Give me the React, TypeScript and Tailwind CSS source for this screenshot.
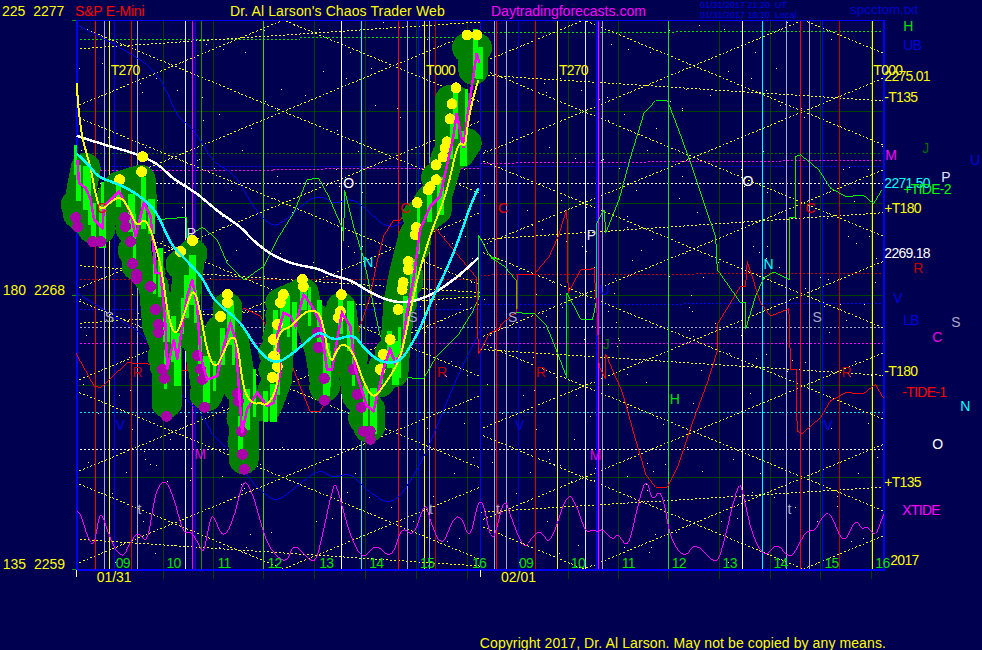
const at = (ox: number, oy: number, s: string) =>
  s
    .trim()
    .split(/\s+/)
    .map((p) => {
      const [x, y] = p.split(",").map(Number);
      return `${(ox + x / 3).toFixed(1)},${(oy + y / 3).toFixed(1)}`;
    })
    .join(" ");

// crop origins the curve points were read from
const z1 = (s: string) => at(0, 0, s);
const z2 = (s: string) => at(491, 0, s);
const z3 = (s: string) => at(0, 325, s);
const z4 = (s: string) => at(491, 325, s);
const z5 = (s: string) => at(60, 140, s);
const z6 = (s: string) => at(270, 20, s);

// rounds a point list off through the segment midpoints
function smooth(pts: string) {
  const p = pts.split(" ").map((q) => q.split(",").map(Number));
  let d = `M${p[0][0]} ${p[0][1]}`;
  for (let i = 1; i < p.length - 1; i++) {
    const mx = (p[i][0] + p[i + 1][0]) / 2;
    const my = (p[i][1] + p[i + 1][1]) / 2;
    d += `Q${p[i][0]} ${p[i][1]} ${mx} ${my}`;
  }
  const last = p[p.length - 1];
  return d + `L${last[0]} ${last[1]}`;
}

const darkGrid = [162, 213, 263, 314, 365, 416, 467, 518, 568, 618, 668, 719, 770, 821, 872];
const gridY = [111, 203, 295, 386, 478];

const verticals: [number, string][] = [
  [94, "#ff0000"], [103, "#a8a8c8"], [108, "#ffff00"], [113, "#0000e0"], [130, "#d80000"],
  [136, "#a8a8c8"], [184, "#e8e8ff"], [191, "#ff00ff"], [194, "#0000ff"], [200, "#00a000"],
  [263, "#20e020"], [341, "#ffffff"], [361, "#00ffff"], [398, "#ff0000"], [407, "#a8a8c8"],
  [418, "#0000ff"], [424, "#ffff00"], [429, "#a8a8c8"], [435, "#c00000"], [480, "#0000ff"],
  [494, "#a8a8c8"], [496, "#ff0000"], [506, "#a8a8c8"], [518, "#0000c0"], [535, "#e00000"],
  [557, "#ffff00"], [585, "#e8e8ff"], [596, "#0000ff"], [597, "#0000ff"], [598, "#ff00ff"],
  [602, "#a8a8c8"], [668, "#20e020"], [742, "#ffffff"], [762, "#00ffff"], [787, "#a8a8c8"],
  [801, "#ff0000"], [810, "#a8a8c8"], [823, "#0000ff"], [840, "#c00000"], [873, "#ffff00"],
];

const dotted: [number, number, number, number, string][] = [
  [75, 39, 300, 39, "#00e000"], [300, 37, 480, 37, "#00e000"], [480, 32, 885, 31, "#00e000"],
  [75, 153, 885, 153, "#007000"],
  [75, 170, 273, 170, "#ff00ff"], [273, 169, 480, 168, "#ff00ff"], [480, 163, 885, 160, "#ff00ff"],
  [75, 166, 885, 166, "#0000ff"],
  [75, 183, 885, 183, "#ffffff"],
  [75, 279, 480, 279, "#c00000"], [480, 275, 885, 273, "#c00000"],
  [75, 310, 480, 310, "#0000ff"], [480, 305, 885, 303, "#0000ff"],
  [75, 328, 885, 328, "#a8a8c8"],
  [75, 344, 885, 344, "#ff00ff"],
  [75, 413, 885, 413, "#00e8e8"],
  [75, 450, 885, 450, "#ffffff"],
];

const flatLines: [number, number, number, number][] = [
  [75, 49, 480, 22], [75, 266, 480, 293], [75, 324, 480, 297], [75, 540, 480, 567],
  [480, 75, 885, 101], [480, 240, 885, 213], [480, 350, 885, 376], [480, 513, 885, 488],
];

const curves: { pts: string; color: string; round?: boolean }[] = [
  {
    color: "#0000f0",
    round: true,
    pts: z1("228,75 300,110 370,150 430,185 470,225 490,255 510,300 530,350 570,380 600,420 640,490 700,520 740,590 780,650 820,682 850,665 880,640 930,595 970,590 1000,615 1050,595 1090,620 1150,680 1200,680 1240,620"),
  },
  {
    color: "#0000f0",
    round: true,
    pts: z1("228,880 300,925 380,975") + " " + z3("440,40 540,215 600,260 640,340 690,378 750,470 800,515 830,532 880,495 940,445 970,440 1000,462 1050,445 1090,490 1150,535 1190,528 1240,460 1290,360 1360,180 1440,20"),
  },
  {
    color: "#00f000",
    pts: z1("470,660 530,655 558,655 558,715 605,682 650,720 680,790 730,842 790,800 830,720 880,640 920,540 955,535 985,590 1028,690 1030,725 1033,570 1060,680 1090,775") + " " + z6("300,810 330,950 380,1030 410,1075 460,1078 500,1010 560,950 610,870 625,840 625,645 660,710 690,720") + " " + z2("0,775 40,800 78,845 78,940 130,942 165,975 190,1035 228,1135 228,880 270,960 305,960 318,900 318,670 340,630 345,700 385,600 420,470 460,340 495,302 530,302 560,380 600,490 650,640 675,710 680,810 750,910 765,910 765,990 795,890 820,835 850,817 897,840 897,655 915,655 915,470 930,465 985,510 1020,565 1065,590 1120,587 1150,612 1175,570"),
  },
  {
    color: "#ff0000",
    pts: z5("45,640 100,740 120,745 200,670 280,675 380,695 385,635 425,665 500,570 550,505 600,530 650,610") + " " + z6("0,930 50,1000 85,1090 120,1178 150,1175 200,1080 225,985 225,1130 270,920 300,830 320,730 340,650 370,602 390,602 410,570 470,570 500,630 550,690 620,775 625,1005 660,940 690,925") + " " + z2("30,975 78,935 80,825 130,825 175,770 200,715 228,630 232,880 270,810 310,808 320,965") + " " + z4("325,125 345,165 345,90 395,205 430,330 465,450 495,490 530,490 560,430 600,310 650,175 680,80") + " " + z2("680,975 750,860 765,860 770,785 810,910 840,950 895,928 897,975") + " " + z4("900,135 917,135 920,320 935,328 990,280 1020,230 1065,205 1120,208 1155,180 1180,222"),
  },
  {
    color: "#ff00ff",
    round: true,
    pts: z3("228,560 240,565 260,640 280,670 295,575 305,572 320,620 345,680 370,700 385,660 415,620 440,665 465,495 495,465 520,520 550,635 570,618 600,670 610,690 630,580 640,575 670,650 705,570 730,455 760,515 795,650 830,700 860,715 880,658 910,690 945,722 965,640 1000,478 1010,485 1050,640 1090,710 1125,655 1175,710 1205,600 1240,645 1275,527 1290,590 1325,675 1360,580 1385,577 1410,655 1440,497 1470,630") + " " + z4("0,630 10,645 40,515 60,580 100,680 125,635 150,617 178,668 230,497 260,550 285,630 305,615 320,625 335,612 365,650 380,625 410,675 430,595 465,450 485,535 505,497 520,530 540,650 585,705 612,652 670,718 690,700 745,460 760,520 785,635 825,705 858,652 900,710 930,650 950,618 975,622 995,575 1020,562 1060,668 1095,580 1115,618 1130,605 1155,640 1180,570"),
  },
];

const blobs = [
  z5("75,85 55,190 60,230 110,270 120,220 175,140 240,120 245,200 225,310 230,360 280,440 290,560 320,640 320,790"),
  z5("385,380 370,500 395,590"),
  z5("430,700 440,770 470,700 490,600 520,600 550,780 550,960"),
  z5("600,800 620,800 650,720 660,560"),
  z6("30,850 100,820 110,870 150,1000 165,1100"),
  z6("215,880 230,1000 250,1050 260,1130 300,1170 295,1225"),
  z6("370,1060 385,850 400,770 430,650 460,600 500,570 500,530 540,400 540,240"),
  z6("590,370 570,400"),
  z6("610,100 610,150"),
];

const magentaMain =
  z5("50,60 55,130 75,145 90,180 100,240 125,265 130,200 175,155 210,220 225,290 250,190 270,230 285,400 300,400 315,560 320,690 340,600 350,660 370,530 380,470 395,420 410,500 420,650 440,720 470,710 490,620 510,550 525,600 545,880 560,810 590,760 620,800 640,790 660,700") +
  " " +
  z6("20,950 40,880 60,890 75,920 100,825 125,860 150,910 170,1050 185,1050 215,880 240,920 255,1050 290,1160 310,1175 340,1050 360,990 375,1030 395,1000 410,880 430,780 450,630 480,560 510,530 550,350 560,280 580,385 595,270 620,100 628,130");

const yellowMain =
  z1("228,248 232,320") +
  " " +
  z5("65,0 90,80 105,170 122,215 150,185 180,170 205,205 230,265 255,230 290,330 310,430 320,520 345,600 375,510 400,440 420,520 440,640 465,690 490,640 510,590 530,600 550,760 580,795 600,790 620,800 650,750 660,640") +
  " " +
  z6("10,1000 30,930 60,925 100,880 130,870 155,890 180,1040 200,990 220,970 250,1000 280,1090 310,1140 340,1100 380,1040 400,980 440,780 470,680 490,620 530,520 565,360 585,385 592,320 605,250 625,180");

const cyanMain =
  z1("228,462 260,490 290,530 330,545 380,565 430,598 470,640 500,710 520,745 570,795 610,840 640,905 720,965") +
  " " +
  z3("760,60 800,105 830,115 860,100 910,60 945,28 965,25 1000,48 1040,35 1065,35 1090,70 1140,115 1200,115 1240,50 1265,0") +
  " " +
  z1("1300,890 1340,810 1380,710 1410,620 1435,565");

const whiteMain = z1("228,408 280,425 340,443 400,460 470,490 520,540 590,580 650,635 720,680 760,725 820,770 890,797 950,805 1000,830 1050,840 1110,880 1170,905 1220,910 1290,890 1370,835 1435,775");

const yellowDots = [
  [142, 157], [141, 172], [119, 180], [180, 252], [192, 241], [227, 295], [227, 303], [220, 317],
  [302, 280], [303, 287], [283, 295], [280, 303], [277, 325], [273, 340], [273, 357], [277, 367],
  [272, 378], [341, 295], [340, 312], [338, 318], [390, 340], [383, 355], [380, 370], [403, 283],
  [402, 290], [398, 310], [408, 262], [408, 270], [417, 203], [416, 228], [415, 235], [430, 187],
  [428, 190], [436, 180], [436, 165], [443, 157], [445, 148], [447, 142], [450, 119], [452, 104],
  [456, 88], [467, 35], [477, 35],
];

const purpleDots = [
  [75, 218], [77, 227], [92, 242], [100, 242], [124, 218], [125, 227], [130, 242], [132, 264],
  [136, 275], [136, 279], [150, 287], [155, 310], [158, 325], [158, 333], [162, 370], [164, 379],
  [166, 417], [197, 356], [200, 370], [202, 380], [204, 408], [237, 394], [238, 402], [241, 432],
  [242, 455], [244, 470], [317, 333], [318, 348], [324, 379], [324, 401], [353, 370], [357, 395],
  [361, 408], [363, 432], [370, 432], [370, 440],
];

const labels: [number, number, string, string][] = [
  [110, 75, "T270", "#ffff00"], [426, 75, "T000", "#ffff00"], [559, 75, "T270", "#ffff00"], [874, 75, "T000", "#ffff00"],
  [885, 81, "2275.01", "#ffff00"], [885, 102, "-T135", "#ffff00"], [886, 160, "M", "#ff00ff"],
  [885, 188, "2271.50", "#00ffff"], [904, 194, "+TIDE-2", "#00ff00"], [942, 182, "P", "#e0e0ff"],
  [885, 213, "+T180", "#ffff00"], [885, 258, "2269.18", "#ffffff"], [914, 273, "R", "#c00000"],
  [894, 303, "V", "#0000e0"], [904, 326, "LB", "#0000e0"], [952, 328, "S", "#a8a8c8"],
  [933, 343, "C", "#e000e0"], [885, 377, "-T180", "#ffff00"], [903, 398, "-TIDE-1", "#ff0000"],
  [961, 412, "N", "#00ffff"], [933, 450, "O", "#ffffff"], [885, 488, "+T135", "#ffff00"],
  [903, 516, "XTIDE", "#ff00ff"], [891, 566, "2017", "#ffff00"], [904, 31, "H", "#00e000"],
  [904, 50, "UB", "#0000e0"], [923, 153, "J", "#007000"], [971, 165, "U", "#0000e0"],
  [343, 188, "O", "#ffffff"], [363, 267, "N", "#00ffff"], [400, 213, "C", "#e00000"], [96, 213, "C", "#e00000"],
  [186, 238, "P", "#e0e0ff"], [104, 323, "S", "#a8a8c8"], [408, 323, "S", "#a8a8c8"], [132, 378, "R", "#c00000"],
  [437, 378, "R", "#c00000"], [115, 431, "V", "#0000e0"], [137, 515, "t", "#a8a8c8"], [429, 515, "t", "#a8a8c8"],
  [194, 460, "M", "#e000e0"], [498, 213, "C", "#e00000"], [587, 240, "P", "#e0e0ff"], [600, 295, "U", "#0000e0"],
  [508, 323, "S", "#a8a8c8"], [813, 323, "S", "#a8a8c8"], [743, 186, "O", "#ffffff"], [764, 269, "N", "#00ffff"],
  [806, 213, "C", "#e00000"], [536, 378, "R", "#c00000"], [842, 378, "R", "#c00000"], [603, 350, "J", "#007000"],
  [515, 431, "V", "#0000e0"], [824, 431, "V", "#0000e0"], [590, 461, "M", "#e000e0"], [670, 405, "H", "#00e000"],
  [496, 515, "t", "#a8a8c8"], [788, 515, "t", "#a8a8c8"],
  [115, 569, "09", "#00e000"], [166, 569, "10", "#00e000"], [217, 569, "11", "#00e000"], [267, 569, "12", "#00e000"],
  [319, 569, "13", "#00e000"], [369, 569, "14", "#00e000"], [420, 569, "15", "#00e000"], [472, 569, "16", "#00e000"],
  [519, 569, "09", "#00e000"], [571, 569, "10", "#00e000"], [622, 569, "11", "#00e000"], [672, 569, "12", "#00e000"],
  [723, 569, "13", "#00e000"], [774, 569, "14", "#00e000"], [825, 569, "15", "#00e000"], [876, 569, "16", "#00e000"],
];

const wideLabels: [number, number, string][] = [
  [96, 583, "01/31"], [501, 583, "02/01"], [2, 295, "180  2268"], [2, 570, "135  2259"],
];

// same speckle in both day panels
function speckle() {
  let seed = 1234;
  const next = () => {
    seed = (seed * 16807) % 2147483647;
    return seed / 2147483647;
  };
  let d = "";
  for (let i = 0; i < 200; i++) {
    const x = Math.floor(76 + next() * 403);
    const y = Math.floor(22 + next() * 546);
    d += `M${x} ${y + 0.5}h1M${x + 405} ${y + 0.5}h1`;
  }
  return d;
}

function greenBars() {
  return magentaMain.split(" ").map((p, i) => {
    const [x, y] = p.split(",").map(Number);
    const h = 30 + ((i * 7) % 24);
    return <rect key={i} x={Math.floor(x) - 3} y={y - h / 2} width={3 + (i % 3) * 2} height={h} fill="#00ff00" />;
  });
}

function diagonals(cx: number, id: string) {
  const s = 91.67 / 220;
  const span = 330;
  const lines = [];
  for (let k = -3; k < 10; k++) {
    const y = 20 + 91.67 * k;
    lines.push(<line key={`a${k}`} x1={cx - span} y1={y + s * span} x2={cx + span} y2={y - s * span} />);
    lines.push(<line key={`b${k}`} x1={cx - span} y1={y - s * span} x2={cx + span} y2={y + s * span} />);
  }
  return (
    <g clipPath={`url(#${id})`} stroke="#ffff00" strokeDasharray="2 2">
      {lines}
    </g>
  );
}

function Chart() {
  return (
    <svg width={982} height={580} viewBox="0 20 982 580" shapeRendering="crispEdges" className="block">
      <defs>
        <clipPath id="day1">
          <rect x={75} y={20} width={405} height={550} />
        </clipPath>
        <clipPath id="day2">
          <rect x={480} y={20} width={405} height={550} />
        </clipPath>
      </defs>

      {/* hour and price grid */}
      <g stroke="#004000">
        {darkGrid.map((x) => (
          <line key={x} x1={x + 0.5} y1={20} x2={x + 0.5} y2={580} />
        ))}
        {gridY.map((y) => (
          <line key={y} x1={75} y1={y + 0.5} x2={885} y2={y + 0.5} />
        ))}
        <line x1={71} y1={20.5} x2={75} y2={20.5} stroke="#00a000" />
        <line x1={71} y1={295.5} x2={75} y2={295.5} stroke="#00a000" />
        <line x1={71} y1={570.5} x2={75} y2={570.5} stroke="#00a000" />
      </g>
      <path d={speckle()} stroke="#ffffff" />

      {dotted.map(([x1, y1, x2, y2, c], i) => (
        <line key={i} x1={x1} y1={y1 + 0.5} x2={x2} y2={y2 + 0.5} stroke={c} strokeDasharray="2 2" />
      ))}
      {diagonals(283, "day1")}
      {diagonals(584, "day2")}
      <g stroke="#ffff00" strokeDasharray="2 2">
        {flatLines.map(([x1, y1, x2, y2], i) => (
          <line key={i} x1={x1} y1={y1} x2={x2} y2={y2} />
        ))}
      </g>

      {verticals.map(([x, c], i) => (
        <line key={i} x1={x + 0.5} y1={20} x2={x + 0.5} y2={570} stroke={c} />
      ))}

      {/* frame */}
      <g stroke="#0000ff">
        <line x1={75} y1={20.5} x2={885} y2={20.5} />
        <line x1={76} y1={20} x2={76} y2={571} strokeWidth={2} />
        <line x1={885} y1={20} x2={885} y2={571} strokeWidth={2} />
        <line x1={75} y1={571} x2={886} y2={571} strokeWidth={2} />
      </g>
      <line x1={75.5} y1={571} x2={75.5} y2={578} stroke="#ffffc0" />
      <line x1={480.5} y1={571} x2={480.5} y2={578} stroke="#ffffc0" />

      {curves.map((c, i) =>
        c.round ? (
          <path key={i} d={smooth(c.pts)} fill="none" stroke={c.color} />
        ) : (
          <polyline key={i} points={c.pts} fill="none" stroke={c.color} />
        ),
      )}

      {/* price bands: the dots sit on the edge of the band */}
      <g fill="none" stroke="#008000" strokeWidth={30} strokeLinecap="round" strokeLinejoin="round">
        {blobs.map((b, i) => (
          <polyline key={i} points={b} />
        ))}
      </g>
      <g fill="#008000">
        {yellowDots.slice(2).map(([x, y], i) => (
          <circle key={i} cx={x} cy={y + 13} r={15} />
        ))}
        {purpleDots.map(([x, y], i) => (
          <circle key={i} cx={x} cy={y - 13} r={15} />
        ))}
      </g>
      <g>{greenBars()}</g>

      <path d={smooth(whiteMain)} fill="none" stroke="#ffffff" strokeWidth={2.5} />
      {purpleDots.map(([x, y], i) => (
        <circle key={i} cx={x} cy={y} r={5.5} fill="#aa00aa" />
      ))}
      {yellowDots.map(([x, y], i) => (
        <circle key={i} cx={x} cy={y} r={5.5} fill="#ffff00" />
      ))}
      <polyline points={magentaMain} fill="none" stroke="#ff00ff" strokeWidth={2.5} />
      <path d={smooth(yellowMain)} fill="none" stroke="#ffff00" strokeWidth={2} />
      <path d={smooth(cyanMain)} fill="none" stroke="#00ffff" strokeWidth={2.5} />

      <g fontSize={14} shapeRendering="auto">
        {labels.map(([x, y, t, c], i) => (
          <text key={i} x={x} y={y} fill={c} className="tracking-[-0.7px]">
            {t}
          </text>
        ))}
        {wideLabels.map(([x, y, t], i) => (
          <text key={i} x={x} y={y} fill="#ffff00" className="whitespace-pre">
            {t}
          </text>
        ))}
      </g>
    </svg>
  );
}

export default function App() {
  return (
    <div className="flex h-[650px] w-[982px] flex-col overflow-hidden bg-[#000050] font-['Liberation_Sans',Arial,sans-serif] text-[14px] leading-none">
      <header className="flex h-5 items-center whitespace-pre">
        <span className="w-[75px] pl-0.5 pt-0.5 text-[#ffff00]">225  2277</span>
        <span className="w-[155px] pt-0.5 text-[#ff0000] tracking-[-0.2px]">S&amp;P E-Mini</span>
        <span className="w-[261px] pt-0.5 text-[#ffff00] tracking-[0.12px]">Dr. Al Larson's Chaos Trader Web</span>
        <span className="w-[209px] pt-0.5 text-[#ff00ff]">Daytradingforecasts.com</span>
        <div className="flex w-[150px] flex-col text-[9px] leading-[10px] text-[#0000e0]">
          <span>01/31/2017 21:20  UT</span>
          <span>01/31/2017 16:20  Local</span>
        </div>
        <span className="text-[13.5px] text-[#0000d0]">spcctom.txt</span>
      </header>
      <Chart />
      <footer className="mt-[37px] w-[886px] text-right tracking-[0.1px] text-[#ffff00]">
        Copyright 2017, Dr. Al Larson. May not be copied by any means.
      </footer>
    </div>
  );
}
